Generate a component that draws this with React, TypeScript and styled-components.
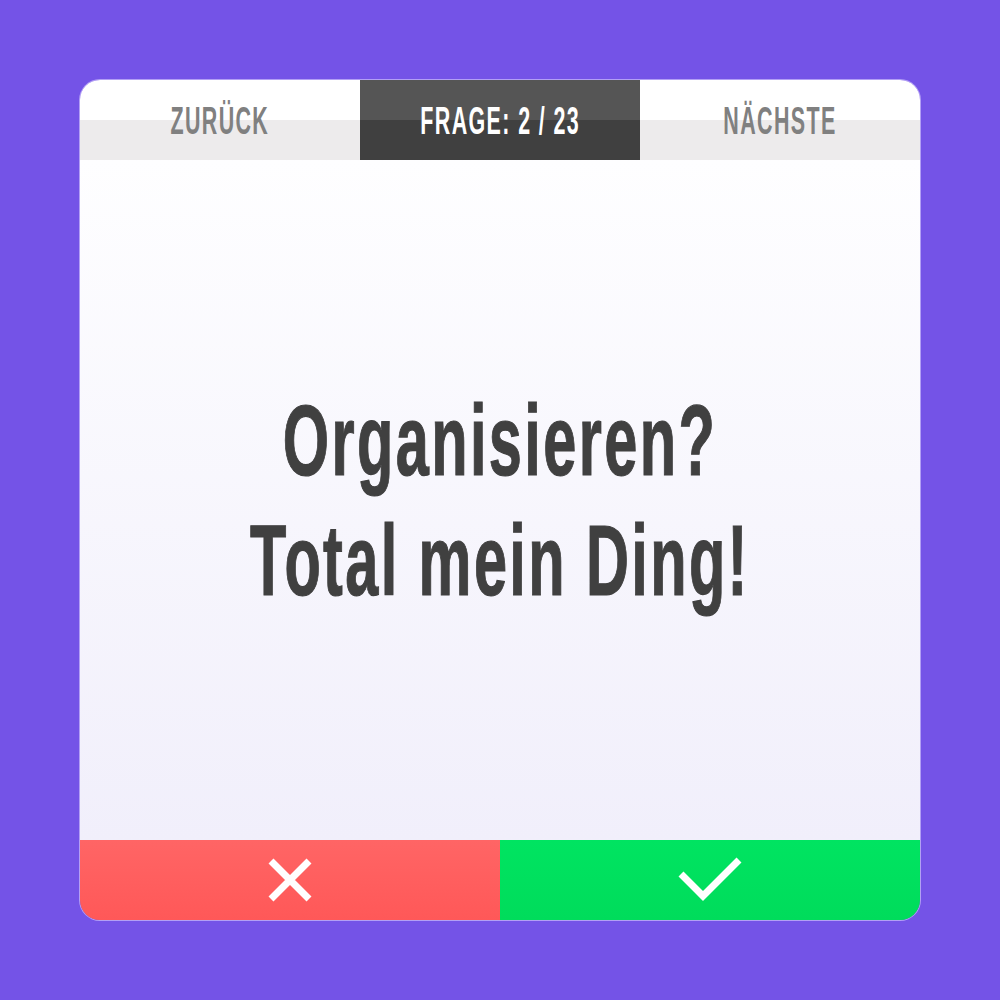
import React from "react";
import styled, { createGlobalStyle } from "styled-components";

const Global = createGlobalStyle`
  html, body { margin: 0; padding: 0; }
  body { background: #7453e7; font-family: "Liberation Sans", Arial, sans-serif; }
`;

const Page = styled.div`
  width: 1000px;
  height: 1000px;
  display: flex;
  align-items: center;
  justify-content: center;
`;

const Card = styled.div`
  width: 840px;
  height: 840px;
  border-radius: 20px;
  overflow: hidden;
  display: flex;
  flex-direction: column;
  box-shadow: 0 0 0 1px rgba(220, 210, 255, 0.6);
`;

const TopBar = styled.div`
  display: grid;
  grid-template-columns: 280px 280px 280px;
  height: 80px;
`;

const Tab = styled.div<{ $active?: boolean }>`
  display: flex;
  align-items: center;
  justify-content: center;
  background: ${(p) =>
    p.$active
      ? "linear-gradient(to bottom, #555555 0 50%, #404040 50% 100%)"
      : "linear-gradient(to bottom, #ffffff 0 50%, #edebec 50% 100%)"};
  color: ${(p) => (p.$active ? "#ffffff" : "#808080")};
`;

const TabLabel = styled.span`
  font-weight: 700;
  font-size: 39px;
  line-height: 1;
  display: inline-block;
  white-space: nowrap;
  letter-spacing: 2.5px;
  transform: scaleX(0.55);
`;

const Body = styled.div`
  flex: 1;
  display: flex;
  align-items: center;
  justify-content: center;
  background: linear-gradient(to bottom, #fefeff, #f1effb);
`;

const Question = styled.h1`
  margin: 0;
  text-align: center;
  font-weight: 700;
  font-size: 100px;
  line-height: 120px;
  color: #404040;
  white-space: nowrap;
  letter-spacing: 4px;
  transform: scaleX(0.595);
  -webkit-text-stroke: 1.2px #404040;
`;

const Footer = styled.div`
  display: grid;
  grid-template-columns: 420px 420px;
  height: 80px;
`;

const Answer = styled.button<{ $yes?: boolean }>`
  border: 0;
  margin: 0;
  padding: 0;
  display: flex;
  align-items: center;
  justify-content: center;
  cursor: pointer;
  background: ${(p) =>
    p.$yes
      ? "linear-gradient(to bottom, #00e461, #00dc5b)"
      : "linear-gradient(to bottom, #ff6565, #ff5858)"};
`;

const CrossIcon = () => (
  <svg width="46" height="46" viewBox="0 0 46 46">
    <path d="M4 4 L42 42 M42 4 L4 42" stroke="#ffffff" strokeWidth="7" fill="none" />
  </svg>
);

const CheckIcon = () => (
  <svg width="64" height="48" viewBox="0 0 64 48">
    <path d="M3 18 L25 40 L61 4" stroke="#ffffff" strokeWidth="7" fill="none" />
  </svg>
);

export default function App() {
  return (
    <>
      <Global />
      <Page>
        <Card>
          <TopBar>
            <Tab>
              <TabLabel>ZURÜCK</TabLabel>
            </Tab>
            <Tab $active>
              <TabLabel>FRAGE: 2 / 23</TabLabel>
            </Tab>
            <Tab>
              <TabLabel>NÄCHSTE</TabLabel>
            </Tab>
          </TopBar>
          <Body>
            <Question>
              Organisieren?
              <br />
              Total mein Ding!
            </Question>
          </Body>
          <Footer>
            <Answer aria-label="Nein">
              <CrossIcon />
            </Answer>
            <Answer $yes aria-label="Ja">
              <CheckIcon />
            </Answer>
          </Footer>
        </Card>
      </Page>
    </>
  );
}
